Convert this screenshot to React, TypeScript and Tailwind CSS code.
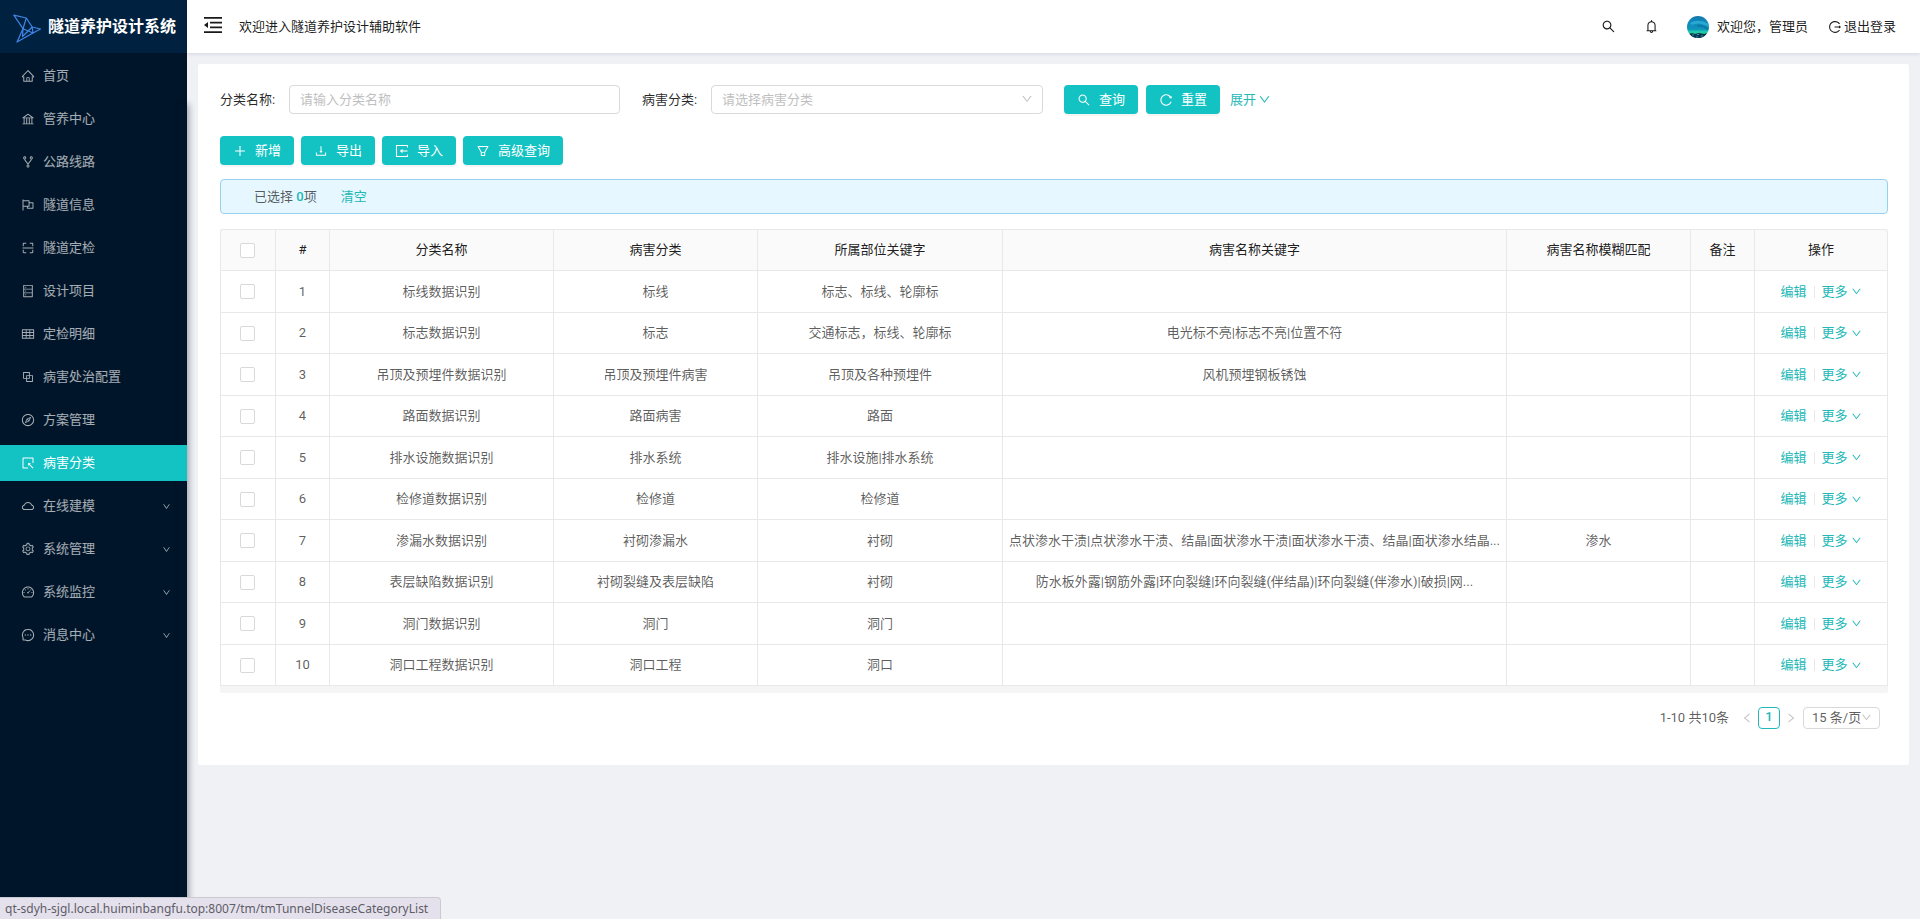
import React from "react";
import {
  AiOutlineHome,
  AiOutlineBank,
  AiOutlineFork,
  AiOutlineFlag,
  AiOutlineScan,
  AiOutlineDatabase,
  AiOutlineTable,
  AiOutlineBlock,
  AiOutlineCompass,
  AiOutlineSelect,
  AiOutlineCloud,
  AiOutlineSetting,
  AiOutlineDashboard,
  AiOutlineMessage,
  AiOutlineSearch,
  AiOutlineBell,
  AiOutlineLogout,
  AiOutlinePlus,
  AiOutlineDownload,
  AiOutlineFilter,
  AiOutlineReload,
  AiOutlineDown,
  AiOutlineLeft,
  AiOutlineRight,
} from "react-icons/ai";

type Icon = React.ComponentType<{ className?: string }>;
type MenuEntry = { label: string; icon: Icon; active?: boolean; nested?: boolean };

const menu: MenuEntry[] = [
  { label: "首页", icon: AiOutlineHome },
  { label: "管养中心", icon: AiOutlineBank },
  { label: "公路线路", icon: AiOutlineFork },
  { label: "隧道信息", icon: AiOutlineFlag },
  { label: "隧道定检", icon: AiOutlineScan },
  { label: "设计项目", icon: AiOutlineDatabase },
  { label: "定检明细", icon: AiOutlineTable },
  { label: "病害处治配置", icon: AiOutlineBlock },
  { label: "方案管理", icon: AiOutlineCompass },
  { label: "病害分类", icon: AiOutlineSelect, active: true },
  { label: "在线建模", icon: AiOutlineCloud, nested: true },
  { label: "系统管理", icon: AiOutlineSetting, nested: true },
  { label: "系统监控", icon: AiOutlineDashboard, nested: true },
  { label: "消息中心", icon: AiOutlineMessage, nested: true },
];

const columns = [
  { title: "分类名称", width: "w-[224px]" },
  { title: "病害分类", width: "w-[204px]" },
  { title: "所属部位关键字", width: "w-[245px]" },
  { title: "病害名称关键字", width: "w-[504px]" },
  { title: "病害名称模糊匹配", width: "w-[184px]" },
  { title: "备注", width: "w-[64px]" },
  { title: "操作", width: "w-[133px]" },
];

const rows: string[][] = [
  ["标线数据识别", "标线", "标志、标线、轮廓标", "", "", ""],
  ["标志数据识别", "标志", "交通标志，标线、轮廓标", "电光标不亮|标志不亮|位置不符", "", ""],
  ["吊顶及预埋件数据识别", "吊顶及预埋件病害", "吊顶及各种预埋件", "风机预埋钢板锈蚀", "", ""],
  ["路面数据识别", "路面病害", "路面", "", "", ""],
  ["排水设施数据识别", "排水系统", "排水设施|排水系统", "", "", ""],
  ["检修道数据识别", "检修道", "检修道", "", "", ""],
  [
    "渗漏水数据识别",
    "衬砌渗漏水",
    "衬砌",
    "点状渗水干渍|点状渗水干渍、结晶|面状渗水干渍|面状渗水干渍、结晶|面状渗水结晶...",
    "渗水",
    "",
  ],
  [
    "表层缺陷数据识别",
    "衬砌裂缝及表层缺陷",
    "衬砌",
    "防水板外露|钢筋外露|环向裂缝|环向裂缝(伴结晶)|环向裂缝(伴渗水)|破损|网...",
    "",
    "",
  ],
  ["洞门数据识别", "洞门", "洞门", "", "", ""],
  ["洞口工程数据识别", "洞口工程", "洞口", "", "", ""],
];

function BirdLogo() {
  return (
    <svg viewBox="0 0 28 32" className="h-8 w-7 shrink-0" fill="none" stroke="#3f86e6" strokeWidth="1.2" strokeLinejoin="round" aria-hidden="true">
      <path d="M0.8 4.200 L13.300 7 L19.200 16 L27.500 18 L20 22 L4 31 L10 17.700 Z" />
      <path d="M13.300 7 L10 17.700 L20 22 L19.200 16 L9.500 25.500 L10 17.700" />
    </svg>
  );
}

function MenuFoldIcon({ className }: { className?: string }) {
  return (
    <svg viewBox="0 0 18 16" className={className} aria-hidden="true">
      <path d="M0 0h18v1.700H0zM6 4.700h12v1.700H6zM6 9.600h12v1.700H6zM0 14.300h18V16H0zM0 8l4-3v6z" fill="currentColor" />
    </svg>
  );
}

function ImportIcon({ className }: { className?: string }) {
  return (
    <svg viewBox="0 0 14 14" className={className} fill="none" stroke="currentColor" strokeWidth="1.1" aria-hidden="true">
      <path d="M12.500 3.500V1.500H1.500V12.500H12.500V10.500" />
      <path d="M12.500 7H6" />
      <path d="M7.500 4.800L4.800 7L7.500 9.200Z" fill="currentColor" stroke="none" />
    </svg>
  );
}

function Avatar() {
  return (
    <svg viewBox="0 0 22 22" className="size-[22px] shrink-0" role="img" aria-label="头像">
      <defs>
        <clipPath id="avatar-clip">
          <circle cx="11" cy="11" r="11" />
        </clipPath>
        <linearGradient id="avatar-sky" x1="0" y1="0" x2="0" y2="1">
          <stop offset="0" stopColor="#1278a8" />
          <stop offset="0.3" stopColor="#1389c0" />
          <stop offset="0.6" stopColor="#0f93b8" />
          <stop offset="0.72" stopColor="#1fd0b0" />
          <stop offset="0.8" stopColor="#22c08f" />
          <stop offset="0.86" stopColor="#0b4f66" />
        </linearGradient>
      </defs>
      <g clipPath="url(#avatar-clip)">
        <rect width="22" height="22" fill="url(#avatar-sky)" />
        <path d="M3 7 Q11 2 22 8 L22 11 Q12 5 5 9 Z" fill="#35bfe0" opacity="0.6" />
        <path d="M10 9 Q16 8 22 13 L20 14 Q15 10 10 11 Z" fill="#0b6da0" opacity="0.6" />
        <path d="M2 18 l3 -1 l3 1 l4 -1 l5 1 l4 -1 v6 h-19 Z" fill="#0a3550" />
        <path d="M5 19 h2 M10 18.500 h2 M14 20 h2 M9 21 h2" stroke="#3ab0cc" strokeWidth="0.8" />
      </g>
    </svg>
  );
}

function PrimaryButton({ icon: ButtonIcon, children }: { icon: Icon; children: React.ReactNode }) {
  return (
    <button
      type="button"
      className="flex h-[29px] items-center gap-2 rounded-[4px] bg-[#13c2c2] px-[13px] text-white shadow-[0_2px_0_rgba(0,0,0,0.045)]"
    >
      <ButtonIcon className="size-[14px]" />
      <span>{children}</span>
    </button>
  );
}

function Checkbox({ label }: { label: string }) {
  return (
    <input
      type="checkbox"
      aria-label={label}
      className="mx-auto block size-[15px] appearance-none rounded-[2px] border border-[#d9d9d9] bg-white checked:bg-[#13c2c2]"
    />
  );
}

function Sidebar() {
  return (
    <aside className="relative z-10 w-[187px] shrink-0 bg-[#001529]">
      <div className="absolute top-[104px] right-0 bottom-0 w-2 bg-[#001529] shadow-[2px_0_6px_rgba(0,21,41,0.35)]" />
      <div className="relative flex h-[53px] items-center gap-[7px] bg-[#002140] pl-[13px] text-white">
        <BirdLogo />
        <h1 className="text-[16px] leading-6 font-bold whitespace-nowrap">隧道养护设计系统</h1>
      </div>
      <nav className="relative pt-[5px]">
        <ul className="flex flex-col gap-[7px]">
          {menu.map(({ label, icon: ItemIcon, active, nested }) => (
            <li key={label}>
              <a
                href="#"
                className={
                  active
                    ? "flex h-9 items-center gap-2 bg-[#13c2c2] pr-4 pl-[21px] text-white"
                    : "flex h-9 items-center gap-2 pr-4 pl-[21px] text-white/65"
                }
              >
                <ItemIcon className="size-[14px] shrink-0" />
                <span className="flex-1">{label}</span>
                {nested && <AiOutlineDown className="size-[9px] text-white/65" />}
              </a>
            </li>
          ))}
        </ul>
      </nav>
    </aside>
  );
}

function Header() {
  return (
    <header className="relative flex h-[53px] items-center bg-white pr-6 pl-[17px] text-black/90 shadow-[0_1px_4px_rgba(0,21,41,0.12)]">
      <button type="button" aria-label="收起菜单" className="mr-[17px] pb-1">
        <MenuFoldIcon className="h-4 w-[18px]" />
      </button>
      <span className="flex-1">欢迎进入隧道养护设计辅助软件</span>
      <button type="button" aria-label="搜索" className="mr-7">
        <AiOutlineSearch className="size-[15px]" />
      </button>
      <button type="button" aria-label="通知" className="mr-7">
        <AiOutlineBell className="size-[15px]" />
      </button>
      <a href="#" className="mr-5 flex items-center gap-2">
        <Avatar />
        <span>欢迎您，管理员</span>
      </a>
      <a href="#" className="flex items-center gap-[2px]">
        <AiOutlineLogout className="size-[14px]" />
        <span>退出登录</span>
      </a>
    </header>
  );
}

function SearchForm() {
  return (
    <form className="flex items-center">
      <label htmlFor="name" className="w-[69px] shrink-0 text-black/85">
        分类名称:
      </label>
      <input
        id="name"
        placeholder="请输入分类名称"
        className="h-[29px] max-w-[331px] min-w-0 flex-1 rounded-[4px] border border-[#d9d9d9] px-[10px] placeholder:text-[#bfbfbf]"
      />
      <label htmlFor="category" className="ml-[22px] w-[69px] shrink-0 text-black/85">
        病害分类:
      </label>
      <div className="relative max-w-[332px] min-w-0 flex-1">
        <select
          id="category"
          className="block h-[29px] w-full appearance-none rounded-[4px] border border-[#d9d9d9] bg-white px-[10px] text-[#bfbfbf]"
        >
          <option>请选择病害分类</option>
        </select>
        <AiOutlineDown className="pointer-events-none absolute top-2 right-[10px] size-3 text-[#bfbfbf]" />
      </div>
      <div className="ml-[21px] flex items-center gap-2">
        <PrimaryButton icon={AiOutlineSearch}>查询</PrimaryButton>
        <PrimaryButton icon={AiOutlineReload}>重置</PrimaryButton>
        <a href="#" className="ml-[2px] flex items-center gap-[2px] text-[#22b8b8]">
          展开
          <AiOutlineDown className="size-[13px]" />
        </a>
      </div>
    </form>
  );
}

function DataTable() {
  return (
    <div className="mt-[15px] rounded-b-[2px] bg-[#f5f5f5] pb-[7px]">
      <table className="w-full table-fixed border-separate border-spacing-0 rounded-t-[4px] border-t border-l border-[#e8e8e8] bg-white text-center">
        <thead>
          <tr className="h-[41px] bg-[#fafafa] text-black/90">
            <th className="w-[55px] rounded-tl-[4px] border-r border-b border-[#e8e8e8] pr-px">
              <Checkbox label="全选" />
            </th>
            <th className="w-[54px] border-r border-b border-[#e8e8e8] font-normal">#</th>
            {columns.map((c) => (
              <th key={c.title} className={`${c.width} border-r border-b border-[#e8e8e8] font-normal last:rounded-tr-[4px]`}>
                {c.title}
              </th>
            ))}
          </tr>
        </thead>
        <tbody>
          {rows.map((cells, i) => (
            <tr key={cells[0]} className="odd:h-[42px] even:h-[41px]">
              <td className="border-r border-b border-[#e8e8e8] pr-px">
                <Checkbox label={`选择${cells[0]}`} />
              </td>
              <td className="border-r border-b border-[#e8e8e8]">{i + 1}</td>
              {cells.map((text, j) => (
                <td key={j} className="truncate border-r border-b border-[#e8e8e8]">
                  {text}
                </td>
              ))}
              <td className="border-r border-b border-[#e8e8e8]">
                <div className="flex items-center justify-center text-[#22b8b8]">
                  <a href="#">编辑</a>
                  <span className="mx-[7px] h-3 w-px bg-[#e8e8e8]" />
                  <a href="#" className="flex items-center gap-[3px]">
                    更多
                    <AiOutlineDown className="size-[11px]" />
                  </a>
                </div>
              </td>
            </tr>
          ))}
        </tbody>
      </table>
    </div>
  );
}

function Pagination() {
  return (
    <div className="mt-[14px] flex items-center justify-end pr-2">
      <span className="mr-3">1-10 共10条</span>
      <button type="button" aria-label="上一页" className="mr-[5px] text-[#bfbfbf]">
        <AiOutlineLeft className="size-3" />
      </button>
      <button
        type="button"
        aria-current="page"
        className="flex h-[22px] w-[22px] justify-center rounded-[4px] border border-[#22b8b8] leading-[18px] font-medium text-[#22b8b8]"
      >
        1
      </button>
      <button type="button" aria-label="下一页" className="mr-[6px] ml-[5px] text-[#bfbfbf]">
        <AiOutlineRight className="size-3" />
      </button>
      <div className="relative">
        <select
          aria-label="每页条数"
          className="block h-[22px] w-[77px] appearance-none rounded-[4px] border border-[#d9d9d9] bg-white pl-2 text-black/65"
        >
          <option>15 条/页</option>
        </select>
        <AiOutlineDown className="pointer-events-none absolute top-[5px] right-2 size-[11px] text-[#bfbfbf]" />
      </div>
    </div>
  );
}

export default function App() {
  return (
    <div className="flex min-h-screen bg-[#f0f1f5] font-['Roboto','Noto_Sans_CJK_SC',sans-serif] text-[13px] leading-5 text-black/65">
      <Sidebar />
      <div className="flex min-w-0 flex-1 flex-col">
        <Header />
        <main className="m-[11px] rounded-[2px] bg-white px-[21px] pt-[21px] pb-9 pl-[22px]">
          <SearchForm />
          <div className="mt-[22px] flex gap-[7px]">
            <PrimaryButton icon={AiOutlinePlus}>新增</PrimaryButton>
            <PrimaryButton icon={AiOutlineDownload}>导出</PrimaryButton>
            <PrimaryButton icon={ImportIcon}>导入</PrimaryButton>
            <PrimaryButton icon={AiOutlineFilter}>高级查询</PrimaryButton>
          </div>
          <div className="mt-[14px] flex h-[35px] items-center rounded-[4px] border border-[#97d1ee] bg-[#e6f7ff] pl-[33px]">
            <span>
              已选择 <span className="font-medium text-[#22b8b8]">0</span>项
            </span>
            <a href="#" className="ml-6 text-[#22b8b8]">
              清空
            </a>
          </div>
          <DataTable />
          <Pagination />
        </main>
      </div>
      <div className="fixed bottom-0 left-0 z-20 h-[22px] rounded-tr-[4px] border-t border-r border-[#cbc9d2] bg-[#e4e1ec] pr-3 pl-[5px] font-['Noto_Sans',sans-serif] text-[12px] leading-[22px] text-[#5f5d68]">
        qt-sdyh-sjgl.local.huiminbangfu.top:8007/tm/tmTunnelDiseaseCategoryList
      </div>
    </div>
  );
}
